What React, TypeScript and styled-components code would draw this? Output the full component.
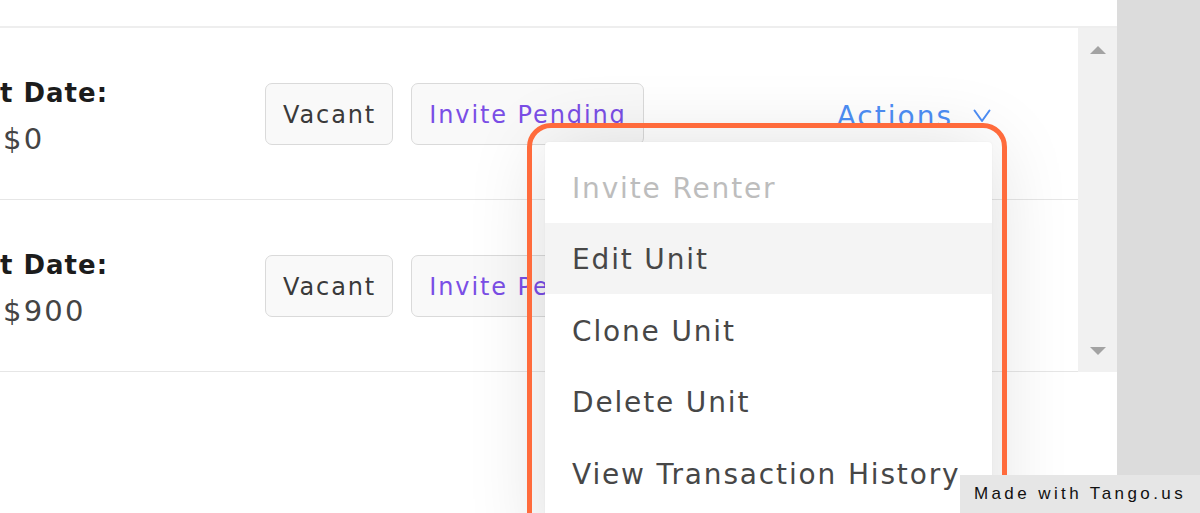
import React from "react";
import styled, { createGlobalStyle } from "styled-components";

const Global = createGlobalStyle`
  html, body { margin: 0; padding: 0; }
  body { background: #dcdcdc; overflow: hidden; }
  #root { width: 1200px; height: 513px; }
`;

const Page = styled.div`
  display: flex;
  width: 1200px;
  height: 513px;
  font-family: "DejaVu Sans", "Noto Sans", sans-serif;
  position: relative;
  overflow: hidden;
`;

const Main = styled.div`
  width: 1117px;
  background: #ffffff;
  display: flex;
  flex-direction: column;
  position: relative;
`;

const Side = styled.div`
  flex: 1;
  background: #dcdcdc;
`;

const TopBar = styled.div`
  height: 26px;
  border-bottom: 2px solid #eeeeee;
`;

const ScrollArea = styled.div`
  display: flex;
  height: 344px;
`;

const List = styled.div`
  flex: 1;
  display: flex;
  flex-direction: column;
`;

const Row = styled.div`
  height: 171px;
  border-bottom: 1px solid #e6e6e6;
  display: flex;
  align-items: center;
  flex: none;
`;

const Info = styled.div`
  width: 265px;
  display: flex;
  flex-direction: column;
  gap: 12px;
  flex: none;
  padding-top: 4px;
`;

const Label = styled.div`
  font-weight: bold;
  font-size: 26px;
  line-height: 34px;
  color: #1c1c1c;
  letter-spacing: 1px;
`;

const Value = styled.div`
  font-size: 29px;
  line-height: 34px;
  color: #444;
  padding-left: 3px;
  letter-spacing: 2.2px;
`;

const Badges = styled.div`
  display: flex;
  gap: 18px;
`;

const Badge = styled.div<{ $tone?: "purple" }>`
  height: 62px;
  box-sizing: border-box;
  padding: 3px 16px 0 17px;
  display: flex;
  align-items: center;
  border: 1.5px solid #dadada;
  border-radius: 7px;
  background: #f9f9f9;
  font-size: 24px;
  letter-spacing: 1.9px;
  color: ${(p) => (p.$tone === "purple" ? "#7a4ee6" : "#3a3a3a")};
`;

const Actions = styled.div`
  margin-left: 193px;
  padding-top: 5px;
  display: flex;
  align-items: center;
  gap: 20px;
  font-size: 28px;
  letter-spacing: 2px;
  color: #4d8ef5;
`;

const Scrollbar = styled.div`
  width: 39px;
  background: #f1f1f1;
  display: flex;
  flex-direction: column;
  justify-content: space-between;
  align-items: center;
  padding: 18px 0 17px;
  box-sizing: border-box;
`;

const Arrow = styled.div<{ $down?: boolean }>`
  width: 0;
  height: 0;
  border-left: 8px solid transparent;
  border-right: 8px solid transparent;
  ${(p) =>
    p.$down
      ? "border-top: 8px solid #a3a3a3;"
      : "border-bottom: 8px solid #a3a3a3;"}
`;

const Menu = styled.div`
  position: absolute;
  left: 545px;
  top: 142px;
  width: 447px;
  background: #ffffff;
  border-radius: 4px;
  box-shadow: 0 6px 80px rgba(0, 0, 0, 0.14), 0 0 2px rgba(0, 0, 0, 0.06);
  padding: 9px 0 40px;
  display: flex;
  flex-direction: column;
`;

const MenuItem = styled.div<{ $disabled?: boolean; $active?: boolean }>`
  height: 71.5px;
  display: flex;
  align-items: center;
  padding: 3px 0 0 27px;
  box-sizing: border-box;
  font-size: 28px;
  letter-spacing: 1.85px;
  color: ${(p) => (p.$disabled ? "#bdbdbd" : "#474747")};
  background: ${(p) => (p.$active ? "#f4f4f4" : "transparent")};
  white-space: nowrap;
`;

const Highlight = styled.div`
  position: absolute;
  left: 527px;
  top: 123px;
  width: 480px;
  height: 440px;
  box-sizing: border-box;
  border: 5px solid #ff6b3c;
  border-radius: 24px;
  pointer-events: none;
`;

const Tango = styled.div`
  position: absolute;
  right: 0;
  bottom: 0;
  width: 240px;
  height: 38px;
  background: #e6e6e6;
  display: flex;
  align-items: center;
  justify-content: center;
  font-family: "Liberation Sans", Arial, sans-serif;
  font-size: 17px;
  letter-spacing: 3.4px;
  color: #111;
`;

const Chevron = () => (
  <svg width="18" height="14" viewBox="0 0 18 14" fill="none">
    <polyline points="1.5,1.5 9,12 16.5,1.5" stroke="#4d8ef5" strokeWidth="2" strokeLinejoin="round" strokeLinecap="round" />
  </svg>
);

const rows = [{ value: "$0" }, { value: "$900" }];

export default function App() {
  return (
    <>
      <Global />
      <Page>
        <Main>
          <TopBar />
          <ScrollArea>
            <List>
              {rows.map((r) => (
                <Row key={r.value}>
                  <Info>
                    <Label>t Date:</Label>
                    <Value>{r.value}</Value>
                  </Info>
                  <Badges>
                    <Badge>Vacant</Badge>
                    <Badge $tone="purple">Invite Pending</Badge>
                  </Badges>
                  <Actions>
                    Actions
                    <Chevron />
                  </Actions>
                </Row>
              ))}
            </List>
            <Scrollbar>
              <Arrow />
              <Arrow $down />
            </Scrollbar>
          </ScrollArea>
          <Menu>
            <MenuItem $disabled>Invite Renter</MenuItem>
            <MenuItem $active>Edit Unit</MenuItem>
            <MenuItem>Clone Unit</MenuItem>
            <MenuItem>Delete Unit</MenuItem>
            <MenuItem>View Transaction History</MenuItem>
          </Menu>
          <Highlight />
        </Main>
        <Side />
        <Tango>Made with Tango.us</Tango>
      </Page>
    </>
  );
}
